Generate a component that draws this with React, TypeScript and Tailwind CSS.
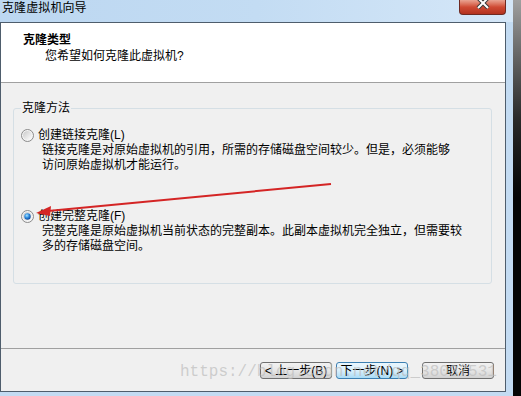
const font = 'font-["Liberation_Sans","Noto_Sans_CJK_SC",sans-serif]';

function Radio({ checked }: { checked: boolean }) {
  return (
    <svg width="13" height="13" viewBox="0 0 13 13" className="shrink-0">
      <defs>
        <linearGradient id={checked ? 'rg1' : 'rg0'} x1="0" y1="0" x2="1" y2="1">
          <stop offset="0" stopColor="#c9c9c9" />
          <stop offset="1" stopColor="#ffffff" />
        </linearGradient>
        <radialGradient id="dot" cx="0.4" cy="0.35" r="0.7">
          <stop offset="0" stopColor="#a8e4ff" />
          <stop offset="0.5" stopColor="#2d8be0" />
          <stop offset="1" stopColor="#0b3f8f" />
        </radialGradient>
      </defs>
      <circle cx="6.5" cy="6.5" r="6" fill="#f4f4f4" stroke="#8a8a8a" />
      <circle cx="6.5" cy="6.5" r="4.5" fill={`url(#${checked ? 'rg1' : 'rg0'})`} />
      {checked && <circle cx="6.5" cy="6.5" r="3.2" fill="url(#dot)" />}
    </svg>
  );
}

function Btn({ label, focused }: { label: string; focused?: boolean }) {
  return (
    <div
      className={`w-[72px] h-[17px] rounded-[3px] border flex items-center justify-center text-[12px] leading-none text-black ${
        focused
          ? 'border-[#3c7fb1] bg-gradient-to-b from-[#eaf6fd] via-[#d9f0fc] to-[#a9dbf6]'
          : 'border-[#707070] bg-gradient-to-b from-[#f2f2f2] via-[#e6e6e6] to-[#d2d2d2]'
      }`}
    >
      {label}
    </div>
  );
}

export default function App() {
  return (
    <div className={`relative w-[521px] h-[396px] flex overflow-hidden ${font}`}>
      <div className="w-[513px] flex flex-col bg-[#c3dbf2]">
        {/* title bar */}
        <div className="h-[22px] flex justify-between bg-gradient-to-r from-[#bcd7f1] via-[#c3dcf3] to-[#d5e7f8]">
          <div className="pl-[2px] text-[12px] leading-[16px] tracking-[0.1px] text-black">克隆虚拟机向导</div>
          <div className="mr-[7px] w-[47px] h-[15px] rounded-b-[4px] border border-t-0 border-[#6e2a22] bg-gradient-to-b from-[#e9a392] via-[#cf4a34] to-[#b3321f] flex justify-center">
            <svg width="14" height="9" viewBox="0 0 14 9">
              <path d="M2 -2 L12 8 M12 -2 L2 8" stroke="#3a3a3a" strokeWidth="4" />
              <path d="M2 -2 L12 8 M12 -2 L2 8" stroke="#ffffff" strokeWidth="2" />
            </svg>
          </div>
        </div>

        {/* client area */}
        <div className="w-[506px] h-[370px] border border-[#4e5d6c] flex flex-col">
          <div className="h-[60px] bg-white border-b border-[#a0a0a0] pt-[9px] text-black text-[12px] leading-[16px]">
            <div className="pl-[22px] font-bold">克隆类型</div>
            <div className="pl-[44px]">您希望如何克隆此虚拟机?</div>
          </div>

          <div className="h-[265px] bg-[#f0f0f0] pt-[17px] pl-[12px]">
            <fieldset className="w-[479px] border border-[#d5dfe5] rounded-[3px] pb-[29px] text-[12px] text-black">
              <legend className="ml-[7px] px-[1px] leading-[16px]">克隆方法</legend>
              <div className="pt-[11px]">
                <div className="flex items-center gap-[4px] pl-[7px] h-[16px]">
                  <Radio checked={false} />
                  <span>创建链接克隆(L)</span>
                </div>
                <div className="pl-[28px] leading-[15px]">
                  <div>链接克隆是对原始虚拟机的引用，所需的存储磁盘空间较少。但是，必须能够</div>
                  <div>访问原始虚拟机才能运行。</div>
                </div>

                <div className="flex items-center gap-[4px] pl-[7px] h-[16px] mt-[35px]">
                  <Radio checked />
                  <span>创建完整克隆(F)</span>
                </div>
                <div className="pl-[28px] leading-[15px]">
                  <div>完整克隆是原始虚拟机当前状态的完整副本。此副本虚拟机完全独立，但需要较</div>
                  <div>多的存储磁盘空间。</div>
                </div>
              </div>
            </fieldset>
          </div>

          <div className="h-[43px] bg-[#f0f0f0] border-t border-[#a0a0a0] pt-[13px] pr-[11px] flex justify-end items-start">
            <div className="flex gap-[4px]">
              <Btn label="< 上一步(B)" />
              <Btn label="下一步(N) >" focused />
            </div>
            <div className="ml-[14px]">
              <Btn label="取消" />
            </div>
          </div>
        </div>
      </div>
      <div className="w-[8px] bg-gradient-to-b from-[#a0a0a0] via-[#2a2a2a] via-30% to-[#050505] to-50%" />

      {/* watermark */}
      <div className='absolute left-[180px] top-[363px] font-["Liberation_Mono",monospace] text-[16px] leading-[18px] text-[#bdbdbd]/70 whitespace-nowrap pointer-events-none'>
        https://blog.csdn.net/qq_38037531
      </div>

      {/* red annotation arrow */}
      <svg className="absolute left-0 top-0 pointer-events-none" width="521" height="396">
        <line x1="331" y1="184" x2="48" y2="211" stroke="#d42525" strokeWidth="2" />
        <polygon points="36,213 51,206 50,216" fill="#d42525" />
      </svg>
    </div>
  );
}
